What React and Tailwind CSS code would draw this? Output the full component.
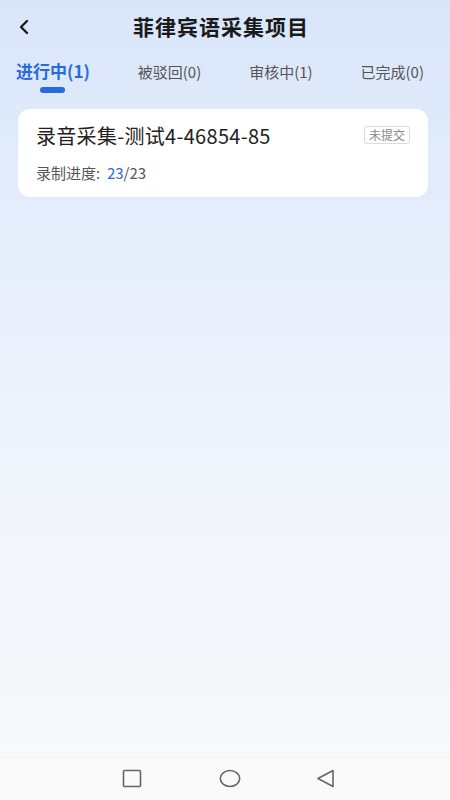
import React from "react";

const tabs = [
  { label: "进行中(1)", active: true },
  { label: "被驳回(0)" },
  { label: "审核中(1)" },
  { label: "已完成(0)" },
];

const App = () => {
  return (
    <div
      className="w-[450px] h-[800px] flex flex-col bg-gradient-to-b from-[#d9e6fa] via-[#f1f5fc] via-60% to-[#f8f9fb] overflow-hidden"
      style={{ fontFamily: '"Noto Sans CJK SC", "Noto Sans", sans-serif' }}
    >
      {/* header */}
      <div className="relative h-[54px] flex items-center justify-center pr-[8px]">
        <svg
          className="absolute left-[17px] top-[18px]"
          width="14"
          height="18"
          viewBox="0 0 14 18"
          fill="none"
          stroke="#1a1a1a"
          strokeWidth="2.4"
          strokeLinecap="round"
          strokeLinejoin="round"
        >
          <path d="M10 3 L4 9 L10 15" />
        </svg>
        <h1 className="text-[21px] font-bold text-[#1a1a1a] tracking-[1px]">菲律宾语采集项目</h1>
      </div>

      {/* tabs */}
      <div className="flex items-start pl-[16px] pr-[26px] h-[42px] justify-between">
        {tabs.map((t) =>
          t.active ? (
            <div key={t.label} className="flex flex-col items-center">
              <span className="text-[17px] font-bold text-[#2a6ae0] leading-[34px]">{t.label}</span>
              <span className="w-[25px] h-[6px] rounded-full bg-[#2a6ae0] -mt-[1px]" />
            </div>
          ) : (
            <span key={t.label} className="text-[15px] text-[#555] leading-[36px]">
              {t.label}
            </span>
          )
        )}
      </div>

      {/* card */}
      <div className="ml-[18px] mr-[22px] mt-[13px] bg-white rounded-[12px] pl-[18px] pr-[18px] pt-[13px] pb-[13px]">
        <div className="flex items-start justify-between">
          <span className="text-[20px] text-[#222] leading-[28px] tracking-[0.3px]">录音采集-测试4-46854-85</span>
          <span className="mt-[4px] border border-[#dcdcdc] rounded-[3px] px-[4px] text-[12px] leading-[16px] text-[#888]">
            未提交
          </span>
        </div>
        <div className="mt-[12px] text-[15px] text-[#555] leading-[22px]">
          录制进度:&nbsp;&nbsp;<span className="text-[#2a6ae0]">23</span>/23
        </div>
      </div>

      <div className="flex-1" />

      {/* nav bar */}
      <div className="h-[43px] bg-[#fafafa] border-t border-[#f0f0f0] flex items-center justify-center pb-[2px] pl-[6px]">
        <svg width="20" height="19" viewBox="0 0 20 19" fill="none" stroke="#666" strokeWidth="1.6">
          <rect x="1.5" y="1.5" width="17" height="16" rx="1" />
        </svg>
        <svg className="ml-[77px]" width="22" height="19" viewBox="0 0 22 19" fill="none" stroke="#666" strokeWidth="1.6">
          <ellipse cx="11" cy="9.5" rx="9.7" ry="8" />
        </svg>
        <svg className="ml-[75px]" width="19" height="19" viewBox="0 0 19 19" fill="none" stroke="#666" strokeWidth="1.6" strokeLinejoin="round">
          <path d="M17 1.5 L2 9.5 L17 17.5 Z" />
        </svg>
      </div>
    </div>
  );
};

export default App;
